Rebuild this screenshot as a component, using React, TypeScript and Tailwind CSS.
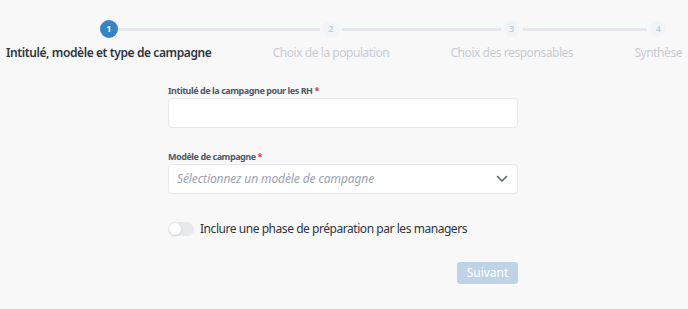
import React, { useState } from 'react';

const steps = [
  { n: 1, label: 'Intitulé, modèle et type de campagne' },
  { n: 2, label: 'Choix de la population' },
  { n: 3, label: 'Choix des responsables' },
  { n: 4, label: 'Synthèse' },
];

const Stepper = ({ current }: { current: number }) => (
  <div className="relative h-[84px] flex justify-between items-start px-[6px] pt-[20px]">
    {/* track behind the circles */}
    <div className="absolute left-[108px] right-[31px] top-[28px] h-[3px] bg-[#e4e7ec]" />
    {steps.map((s) => {
      const active = s.n === current;
      return (
        <div key={s.n} className="relative flex flex-col items-center">
          <div
            className={
              active
                ? 'w-[18px] h-[18px] rounded-full bg-[#3583c8] text-white text-[9px] font-bold flex items-center justify-center'
                : 'w-[22px] h-[22px] -my-[2px] rounded-full bg-[#f1f4f8] border-[3px] border-[#f8f8f8] text-[#c3ccd9] text-[9px] font-semibold flex items-center justify-center'
            }
          >
            {s.n}
          </div>
          <span
            className={
              active
                ? 'mt-[6px] text-[12px] tracking-[-0.4px] font-semibold text-[#2e3540] whitespace-nowrap'
                : 'mt-[6px] text-[12px] tracking-[-0.45px] text-[#c7ccd4] whitespace-nowrap'
            }
          >
            {s.label}
          </span>
        </div>
      );
    })}
  </div>
);

const App: React.FC = () => {
  const [title, setTitle] = useState('');
  const [prep, setPrep] = useState(false);

  return (
    <div className="w-[688px] h-[309px] bg-[#f8f8f8] overflow-hidden font-['Noto_Sans',sans-serif]">
      <Stepper current={1} />

      <div className="w-[350px] ml-[168px]">
        <label className="block text-[9px] tracking-[-0.45px] font-bold text-[#4f5a6b] leading-[14px]">
          Intitulé de la campagne pour les RH <span className="text-[#d9334a]">*</span>
        </label>
        <input
          value={title}
          onChange={(e) => setTitle(e.target.value)}
          className="block w-full h-[30px] bg-white border border-[#e6e8ec] rounded-[4px] px-2 text-sm outline-none"
        />

        <label className="block mt-[22px] text-[9px] tracking-[-0.45px] font-bold text-[#4f5a6b] leading-[14px]">
          Modèle de campagne <span className="text-[#d9334a]">*</span>
        </label>
        <div className="h-[30px] bg-white border border-[#e6e8ec] rounded-[4px] flex items-center justify-between pl-[8px] pr-[9px]">
          <span className="italic text-[12px] tracking-[-0.1px] text-[#9aa2af]">Sélectionnez un modèle de campagne</span>
          <svg width="12" height="8" viewBox="0 0 12 8" fill="none">
            <path d="M1.5 1.5 L6 6 L10.5 1.5" stroke="#5b6576" strokeWidth="1.6" strokeLinecap="round" strokeLinejoin="round" />
          </svg>
        </div>

        <div className="mt-[25px] h-[20px] flex items-center gap-[6px]">
          <button
            onClick={() => setPrep(!prep)}
            className="w-[26px] h-[14px] shrink-0 rounded-full bg-[#e7e9ed] flex items-center px-[1px]"
          >
            <span className="w-[12px] h-[12px] rounded-full bg-white shadow-sm" />
          </button>
          <span className="text-[12px] tracking-[-0.45px] text-[#2e3540] whitespace-nowrap">
            Inclure une phase de préparation par les managers
          </span>
        </div>

        <div className="mt-[23px] flex justify-end">
          <button className="w-[61px] h-[22px] rounded-[3px] bg-[#bed3e6] text-white text-[12px]">Suivant</button>
        </div>
      </div>
    </div>
  );
};

export default App;
